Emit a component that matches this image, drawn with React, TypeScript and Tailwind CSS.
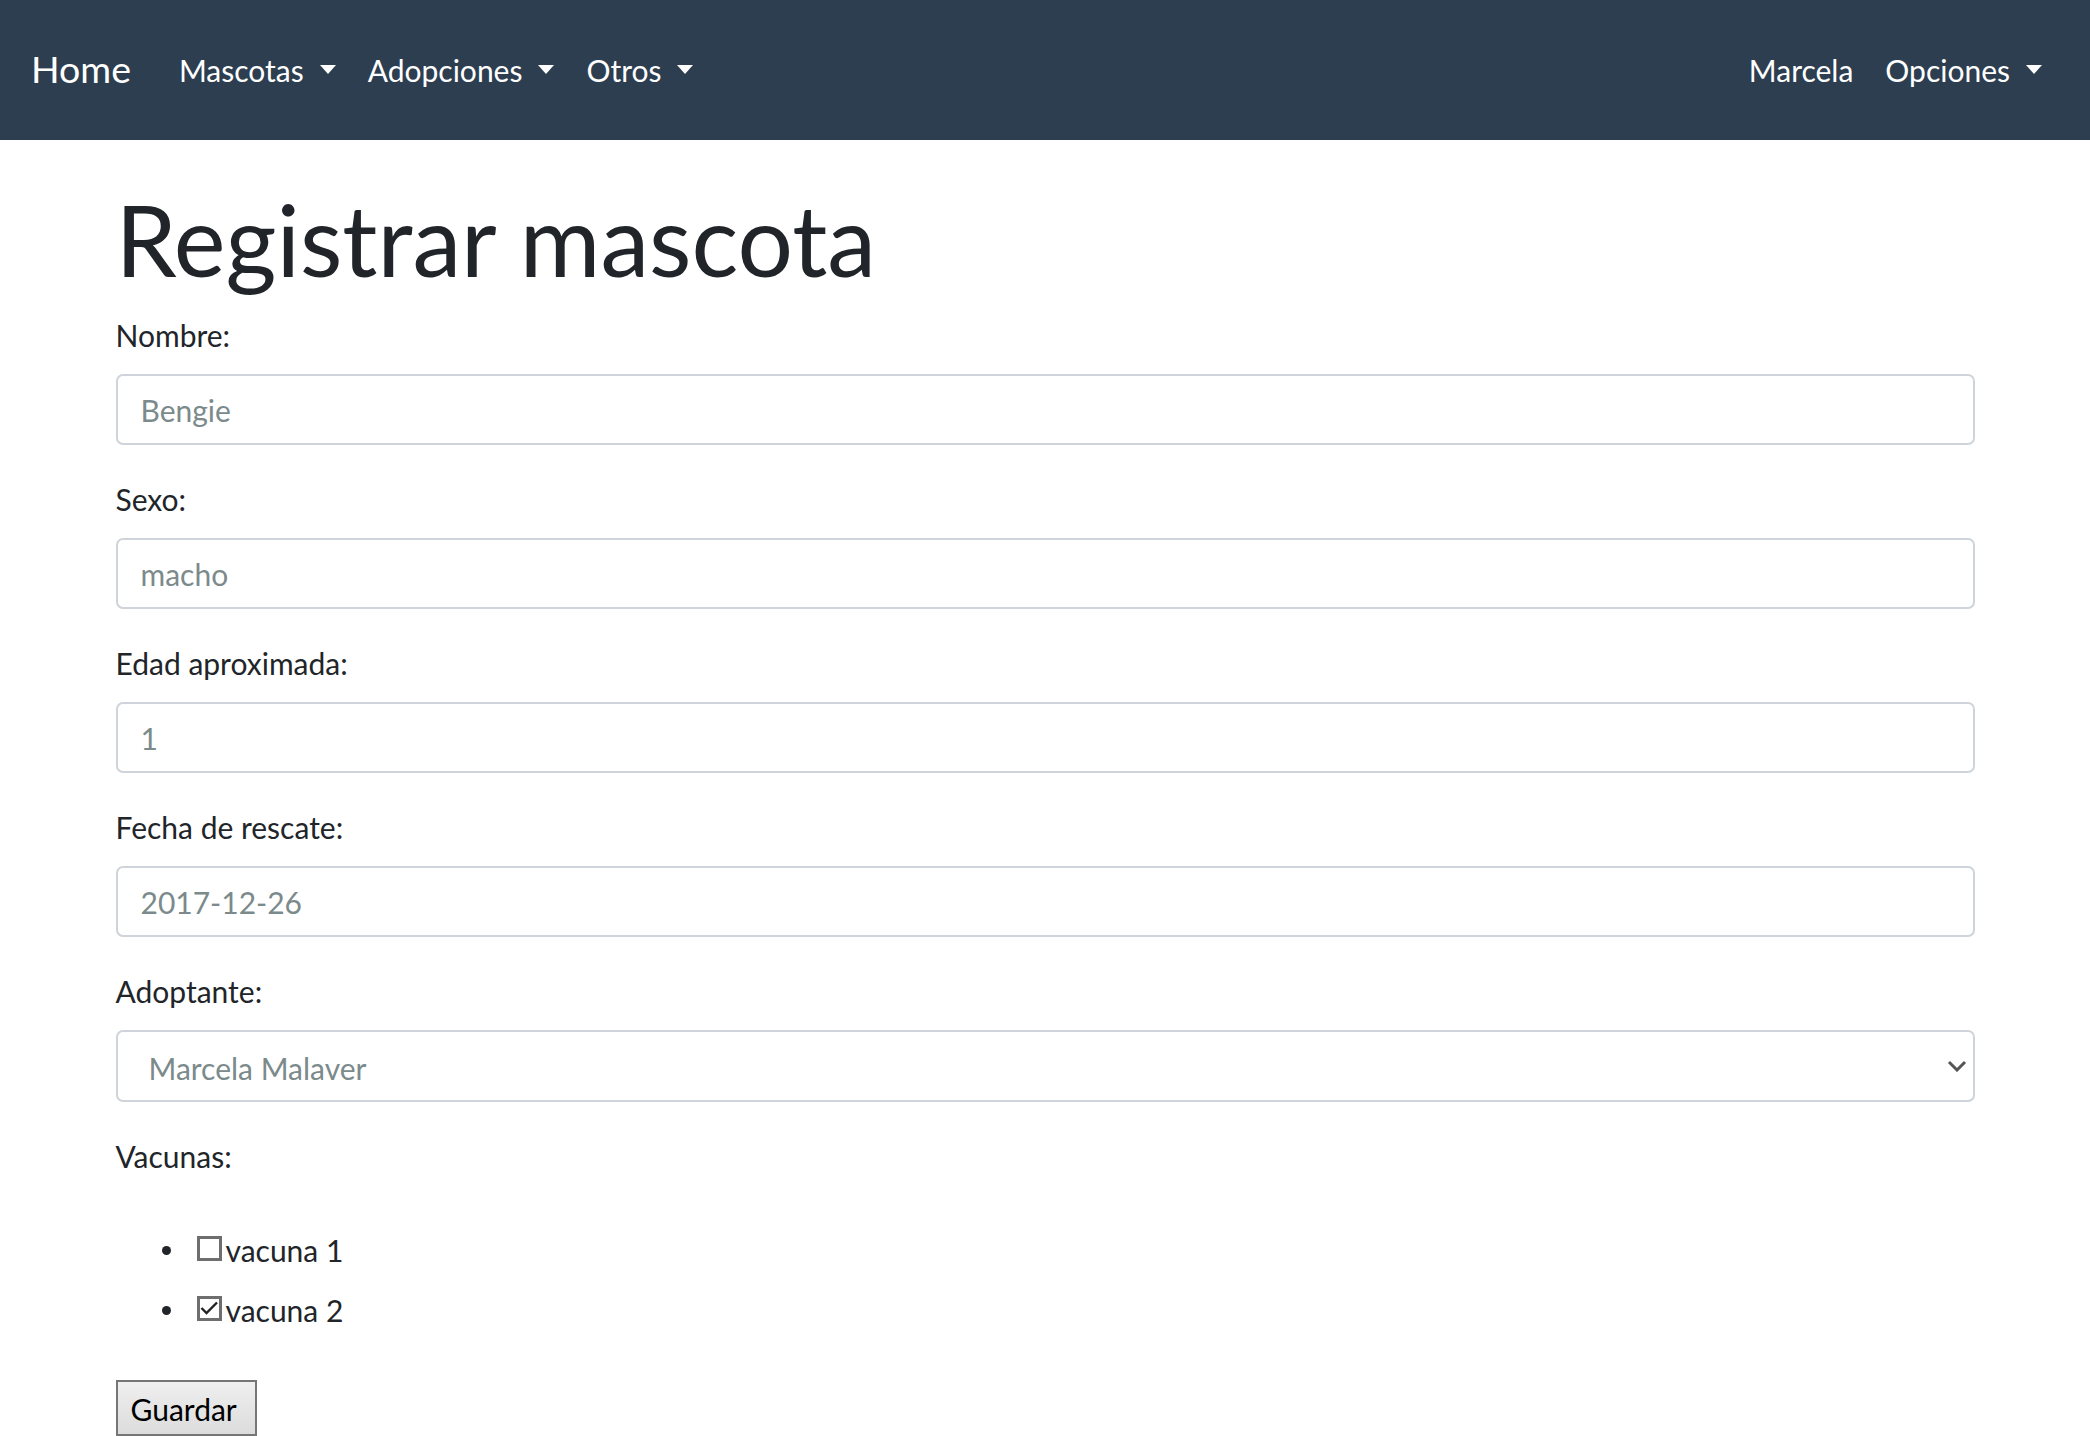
import React from 'react';

const navLeft = ['Mascotas', 'Adopciones', 'Otros'];

function Caret() {
  return <span className="ml-[16px] inline-block h-0 w-0 border-x-[8.5px] border-t-[9px] border-x-transparent border-t-white align-[8px]" />;
}

function NavLink({ label, caret }: { label: string; caret?: boolean }) {
  return (
    <a className="px-[16px] text-[30px] leading-[45px] text-white whitespace-nowrap">
      {label}
      {caret && <Caret />}
    </a>
  );
}

function Field({ label, value }: { label: string; value: string }) {
  return (
    <div className="mb-[31.5px]">
      <label className="block text-[30px] leading-[45px] text-[#212529]">{label}</label>
      <input
        className="mt-[16.5px] block h-[71px] w-full rounded-[7px] border-2 border-[#ced4da] bg-white pl-[23px] text-[30px] text-[#212529] outline-none placeholder:text-[#7b8a8b]"
        placeholder={value}
      />
    </div>
  );
}

function Vacuna({ label, checked }: { label: string; checked?: boolean }) {
  return (
    <li className="flex h-[60px] items-center">
      <span className="ml-[46px] h-[9px] w-[9px] rounded-full bg-[#212529]" />
      <span className="mb-[4px] ml-[26px] flex h-[25px] w-[25px] items-center justify-center border-[3px] border-[#6e6e6e] bg-white">
        {checked && (
          <svg width="19" height="19" viewBox="0 0 19 19" fill="none">
            <path d="M1.5 9 L6.5 14 L17 3.5" stroke="#222" strokeWidth="2.4" />
          </svg>
        )}
      </span>
      <span className="ml-[4px] text-[30px] leading-[45px] text-[#212529]">{label}</span>
    </li>
  );
}

export default function App() {
  return (
    <div className="min-h-screen bg-white font-['Lato','Noto_Sans',sans-serif]">
      <nav className="flex h-[140px] items-center bg-[#2c3e50] pl-[31px] pr-[32px] pt-[1px]">
        <a className="mr-[32px] mb-[4px] text-[37.5px] leading-[56px] text-white">Home</a>
        {navLeft.map((l) => (
          <NavLink key={l} label={l} caret />
        ))}
        <div className="ml-auto flex items-center">
          <NavLink label="Marcela" />
          <NavLink label="Opciones" caret />
        </div>
      </nav>

      <main className="mx-auto w-[1859px]">
        <h1 className="mt-[41px] mb-[14px] text-[98px] leading-[117.6px] font-normal text-[#212529]">Registrar mascota</h1>
        <form>
          <Field label="Nombre:" value="Bengie" />
          <Field label="Sexo:" value="macho" />
          <Field label="Edad aproximada:" value="1" />
          <Field label="Fecha de rescate:" value="2017-12-26" />
          <div className="mb-[31.5px]">
            <label className="block text-[30px] leading-[45px] text-[#212529]">Adoptante:</label>
            <div className="mt-[16.5px] flex h-[72px] w-full items-center justify-between rounded-[7px] border-2 border-[#ced4da] bg-white pl-[31px] pr-[6px] pt-[4px]">
              <span className="text-[30px] text-[#7b8a8b]">Marcela Malaver</span>
              <svg width="20" height="12" viewBox="0 0 20 12" fill="none" className="mb-[4px]">
                <path d="M2 2 L10 10 L18 2" stroke="#555" strokeWidth="3" />
              </svg>
            </div>
          </div>
          <label className="block text-[30px] leading-[45px] text-[#212529]">Vacunas:</label>
          <ul className="mt-[42px]">
            <Vacuna label="vacuna 1" />
            <Vacuna label="vacuna 2" checked />
          </ul>
          <button
            type="button"
            className="mt-[39px] h-[56px] w-[141px] border-2 border-[#767676] bg-linear-to-b from-[#efefef] to-[#dcdcdc] pl-[13px] pb-[7px] pt-[9px] text-left text-[30px] leading-[36px] text-black"
          >
            Guardar
          </button>
        </form>
      </main>
    </div>
  );
}
